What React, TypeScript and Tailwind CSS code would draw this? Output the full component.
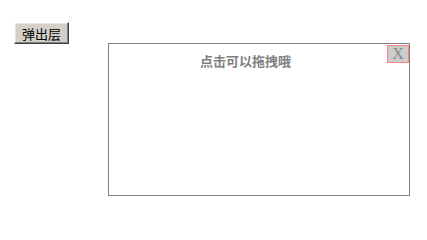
import React from "react";

export default function App() {
  return (
    <div className="relative w-[427px] h-[224px] bg-white overflow-hidden font-['Noto_Sans_CJK_SC',sans-serif]">
      <div className="flex pt-[22px] pl-[14px]">
        <button className="w-[55px] h-[22px] bg-[#d4d0c8] text-black text-[13px] leading-none border border-t-white border-l-white border-r-[#404040] border-b-[#404040] shadow-[inset_-1px_-1px_#808080,inset_1px_1px_#e8e6e1] flex items-center justify-center font-['Noto_Sans_CJK_SC',sans-serif]">
          弹出层
        </button>
      </div>
      <div className="absolute left-[108px] top-[43px] w-[302px] h-[153px] border border-[#808080] bg-white">
        <div className="pl-[91px] pt-[9px] text-[13px] leading-[16px] font-bold text-[#808080]">
          点击可以拖拽哦
        </div>
        <div className="absolute top-px right-0 w-[22px] h-[18px] bg-[#cccccc] border border-[#ff8080] flex items-center justify-center text-[16px] leading-none text-[#8a8a8a] font-['Liberation_Serif',serif]">
          X
        </div>
      </div>
    </div>
  );
}
